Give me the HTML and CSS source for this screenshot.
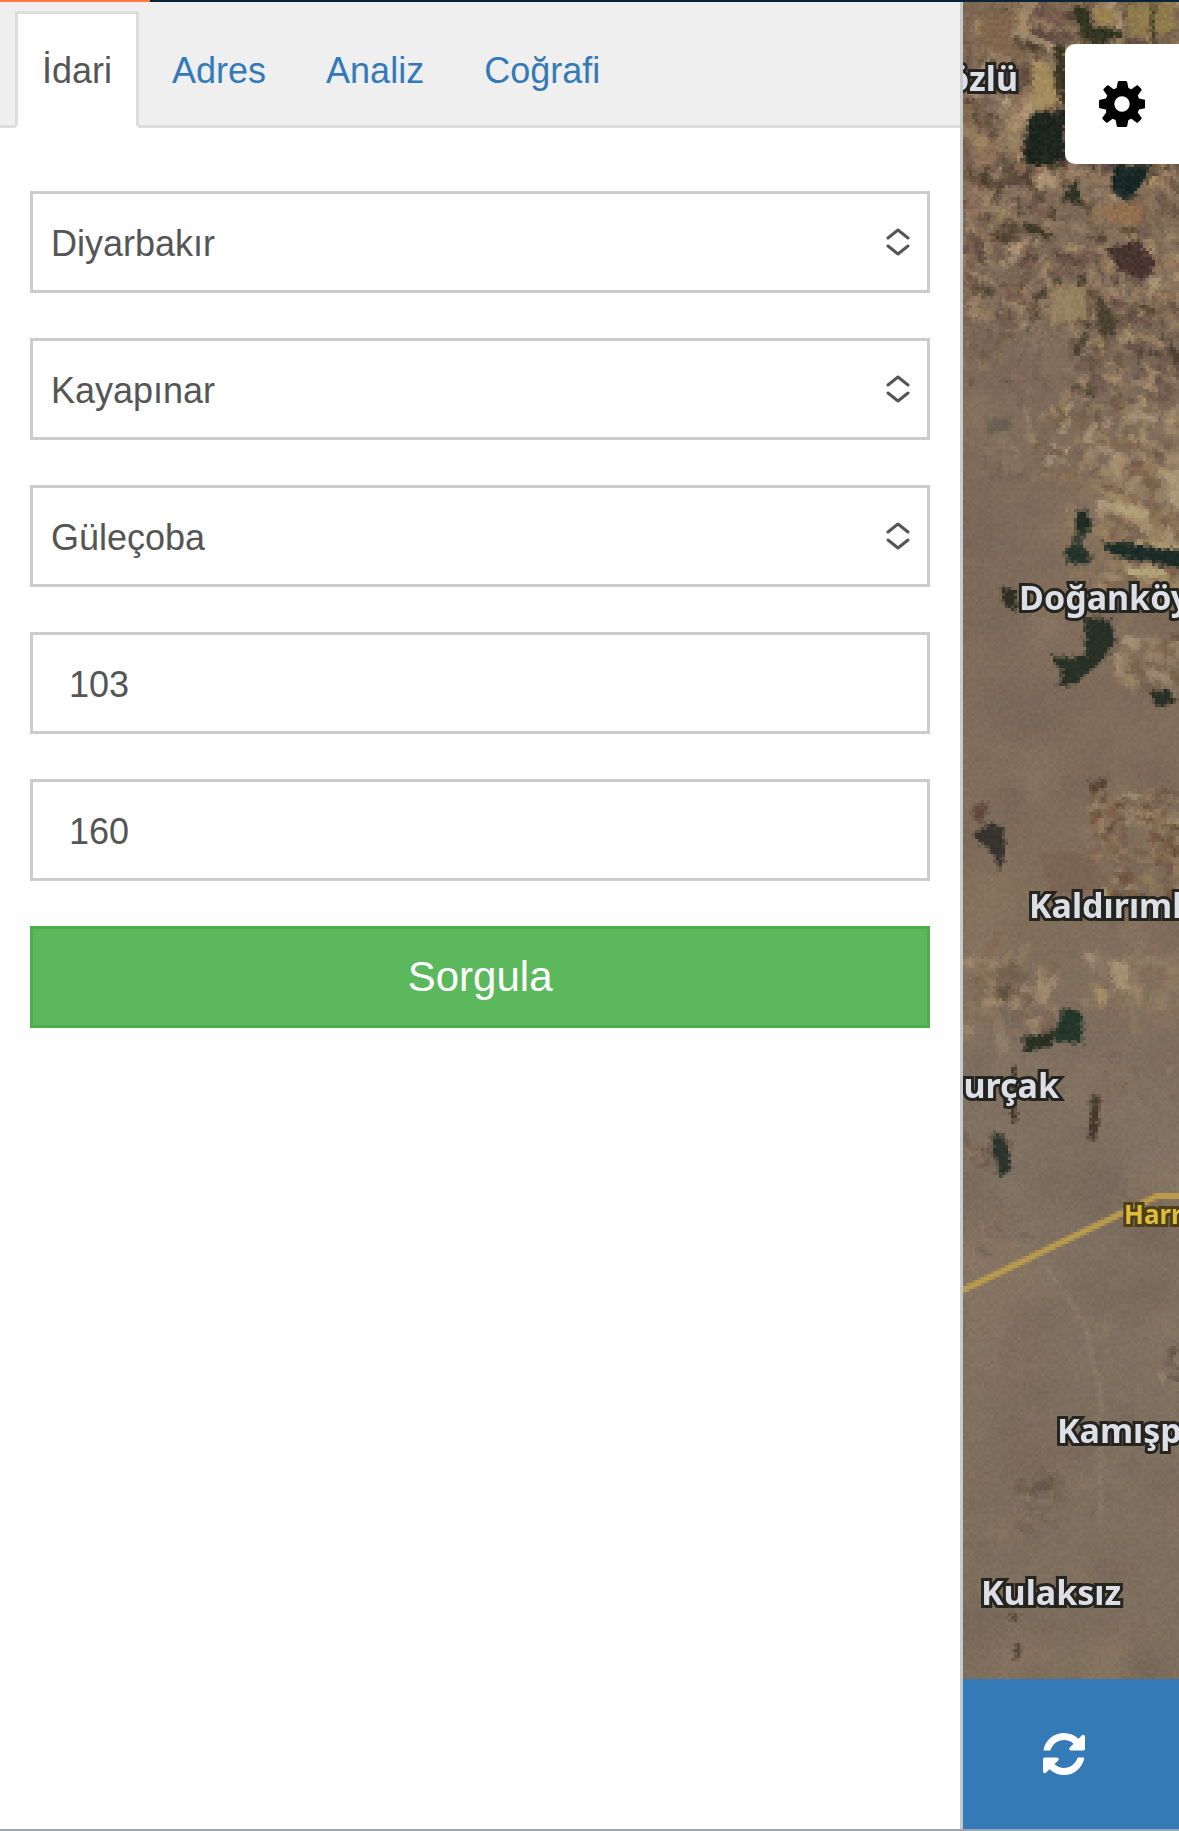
FILE: index.html
```html
<!DOCTYPE html>
<html lang="tr">
<head>
  <meta charset="UTF-8" />
  <meta name="viewport" content="width=device-width, initial-scale=1.0"/>
  <title>Parsel Sorgu</title>
  <link rel="stylesheet" href="styles.css">
</head>
<body>
  <div class="topbar"><div class="topbar-fill"></div></div>

  <div class="workspace">
    <aside class="panel">
      <nav class="tabs">
        <a class="tab active" href="#idari">İdari</a>
        <a class="tab" href="#adres">Adres</a>
        <a class="tab" href="#analiz">Analiz</a>
        <a class="tab" href="#cografi">Coğrafi</a>
      </nav>

      <form class="query" id="idari">
        <div class="select-wrap">
          <select class="field" name="il" aria-label="İl">
            <option>Diyarbakır</option>
          </select>
          <svg class="chevron" viewBox="0 0 24 28" aria-hidden="true"><path d="M2 10l10-8 10 8M2 18l10 8 10-8"/></svg>
        </div>
        <div class="select-wrap">
          <select class="field" name="ilce" aria-label="İlçe">
            <option>Kayapınar</option>
          </select>
          <svg class="chevron" viewBox="0 0 24 28" aria-hidden="true"><path d="M2 10l10-8 10 8M2 18l10 8 10-8"/></svg>
        </div>
        <div class="select-wrap">
          <select class="field" name="mahalle" aria-label="Mahalle">
            <option>Güleçoba</option>
          </select>
          <svg class="chevron" viewBox="0 0 24 28" aria-hidden="true"><path d="M2 10l10-8 10 8M2 18l10 8 10-8"/></svg>
        </div>
        <input class="field number" type="text" name="ada" value="103" aria-label="Ada" />
        <input class="field number" type="text" name="parsel" value="160" aria-label="Parsel" />
        <button class="submit" type="submit">Sorgula</button>
      </form>
    </aside>

    <main class="map">
      <div class="map-view">
        <canvas class="terrain" id="terrain" width="72" height="559"></canvas>
        <svg class="labels" aria-label="Harita">
          <text class="place" x="55" y="89" text-anchor="end">özlü</text>
          <text class="place" x="56" y="608">Doğanköy</text>
          <text class="place" x="66" y="916">Kaldırıml</text>
          <text class="place" x="96" y="1096" text-anchor="end">urçak</text>
          <text class="road-name" x="161" y="1222">Harr</text>
          <text class="place" x="94" y="1441">Kamışp</text>
          <text class="place" x="18" y="1603">Kulaksız</text>
        </svg>
        <button class="settings" type="button" aria-label="Ayarlar">
          <svg viewBox="0 0 46 46" aria-hidden="true"><path fill-rule="evenodd" d="M19 0h8q1 0 1.200 1l1.200 6 3 1.300 5-3.700q1-.6 1.800.2l3 3q.8.800.2 1.700l-3.600 5.100 1.200 2.900 6 1.300q1 .2 1 1.200v6q0 1-1 1.200l-6 1.300-1.200 2.900 3.600 5.100q.6.900-.2 1.700l-3 3q-.8.800-1.800.2l-5-3.700-3 1.300-1.200 6q-.2 1-1.200 1h-8q-1 0-1.200-1l-1.200-6-3-1.300-5 3.700q-1 .6-1.800-.2l-3-3q-.8-.8-.2-1.700l3.600-5.100L7 28.500l-6-1.300q-1-.2-1-1.200v-6q0-1 1-1.200l6-1.300 1.200-2.900-3.600-5.100q-.6-.9.2-1.700l3-3q.8-.8 1.800-.2l5 3.700 3-1.300 1.200-6q.2-1 1.200-1zM23 15.300a7.700 7.700 0 1 0 0 15.400 7.700 7.700 0 0 0 0-15.400z"/></svg>
        </button>
      </div>
      <div class="map-actions">
        <button class="refresh" type="button" aria-label="Yenile">
          <svg viewBox="0 0 1536 1536" aria-hidden="true"><path d="M1511 928q0 5-1 7-64 268-268 434.500T764 1536q-146 0-282.500-55T238 1324l-129 129q-19 19-45 19t-45-19-19-45V960q0-26 19-45t45-19h448q26 0 45 19t19 45-19 45l-137 137q71 66 161 102t187 36q134 0 250-65t186-179q11-17 53-117 8-23 30-23h192q13 0 22.500 9.500t9.500 22.500zm25-800v448q0 26-19 45t-45 19h-448q-26 0-45-19t-19-45 19-45l138-138Q969 256 768 256q-134 0-250 65T332 500q-11 17-53 117-8 23-30 23H50q-13 0-22.500-9.500T18 608v-7q65-268 270-434.500T768 0q146 0 284 55.500T1297 212l130-129q19-19 45-19t45 19 19 45z"/></svg>
        </button>
      </div>
    </main>
  </div>

  <script src="map.js"></script>
</body>
</html>
```

FILE: styles.css
```css
* {
  box-sizing: border-box;
}
body {
  margin: 0;
  min-height: 100vh;
  display: flex;
  flex-direction: column;
  font-family: "Liberation Sans", Arial, sans-serif;
  font-size: 36px;
  color: #555;
  background: #fff;
}
.topbar {
  height: 2px;
  background: #0b2338;
}
.topbar-fill {
  width: 150px;
  height: 2px;
  background: #ff7840;
}
.workspace {
  flex: 1;
  display: flex;
  border-bottom: 2px solid #9aa7b0;
}

/* left panel */
.panel {
  width: 81.7%;
  border-right: 3px solid #c6caca;
  background: #fefefe;
}
.tabs {
  display: flex;
  gap: 6px;
  padding: 9px 15px 0;
  background: #efefef;
  border-bottom: 3px solid #ddd;
}
.tab {
  margin-bottom: -3px;
  padding: 37px 24px 34px;
  border: 3px solid transparent;
  line-height: 40px;
  color: #337ab7;
  text-decoration: none;
}
.tab.active {
  color: #555;
  background: #fff;
  border-color: #ddd #ddd #fff;
}
.query {
  display: flex;
  flex-direction: column;
  gap: 45px;
  padding: 63px 30px;
}
.select-wrap {
  position: relative;
}
.field {
  display: block;
  width: 100%;
  height: 102px;
  margin: 0;
  padding: 3px 18px 0;
  border: 3px solid #ccc;
  border-radius: 0;
  background: #fff;
  color: #555;
  font: inherit;
  appearance: none;
}
.number {
  padding-left: 36px;
}
.chevron {
  position: absolute;
  top: 37px;
  right: 20px;
  width: 24px;
  height: 28px;
  fill: none;
  stroke: #555;
  stroke-width: 3;
  stroke-linecap: round;
  stroke-linejoin: round;
  pointer-events: none;
}
.submit {
  height: 102px;
  border: 3px solid #4cae4c;
  background: #5cb85c;
  color: #fff;
  font: inherit;
  font-size: 42px;
  cursor: pointer;
}

/* map */
.map {
  flex: 1;
  display: flex;
  flex-direction: column;
  min-width: 0;
}
.map-view {
  position: relative;
  flex: 1;
  overflow: hidden;
  background: #83705b;
}
.terrain, .labels {
  position: absolute;
  top: 0;
  left: 0;
  width: 100%;
  height: 100%;
}
.terrain {
  object-fit: cover;
  object-position: left top;
  image-rendering: pixelated;
}
.place, .road-name {
  font-family: "Noto Sans", sans-serif;
  font-weight: 700;
  font-size: 34px;
  fill: #dcdfe5;
  stroke: #25241f;
  stroke-width: 6px;
  stroke-linejoin: miter;
  paint-order: stroke;
}
.road-name {
  font-size: 26px;
  fill: #dfbc3c;
  stroke: #4d4019;
}
.settings {
  position: absolute;
  top: 42px;
  right: 0;
  width: 114px;
  height: 120px;
  padding: 0;
  border: 0;
  border-radius: 10px 0 0 10px;
  background: #fff;
  cursor: pointer;
}
.settings svg {
  width: 46px;
  height: 46px;
  fill: #000;
}
.map-actions {
  display: flex;
  height: 150px;
  background: #337ab7;
}
.refresh {
  width: 202px;
  padding: 0;
  border: 0;
  background: #337ab7;
  cursor: pointer;
}
.refresh svg {
  width: 42px;
  height: 42px;
  fill: #fff;
}
.settings svg, .refresh svg {
  display: block;
  margin: auto;
}
```

FILE: map.js
```js
const canvas = document.getElementById('terrain');
const ctx = canvas.getContext('2d');
const CELL = 3;
const W = canvas.width * CELL;
const H = canvas.height * CELL;

// fixed seed so the ground looks the same on every load
let seed = 4217;
function rnd() {
  seed = (seed * 1664525 + 1013904223) % 4294967296;
  return seed / 4294967296;
}

function poly(color, points) {
  ctx.fillStyle = color;
  ctx.beginPath();
  points.forEach(([x, y], i) => i ? ctx.lineTo(x, y) : ctx.moveTo(x, y));
  ctx.closePath();
  ctx.fill();
}

// small rotated plots scattered inside a box
function plots(x, y, w, h, count, size, colors, alpha) {
  for (let i = 0; i < count; i++) {
    ctx.save();
    ctx.translate(x + rnd() * w, y + rnd() * h);
    ctx.rotate([0.4, -1.1, 1.4, 0.1][Math.floor(rnd() * 4)]);
    ctx.globalAlpha = alpha * (0.4 + rnd() * 0.6);
    ctx.fillStyle = colors[Math.floor(rnd() * colors.length)];
    ctx.fillRect(0, 0, size * (0.5 + rnd() * 1.6), size * (0.2 + rnd() * 0.5));
    ctx.restore();
  }
}

ctx.scale(1 / CELL, 1 / CELL);

const ground = ctx.createLinearGradient(0, 0, 0, H);
ground.addColorStop(0, '#806a52');
ground.addColorStop(0.22, '#7e6b5a');
ground.addColorStop(0.42, '#806d5b');
ground.addColorStop(0.54, '#806d59');
ground.addColorStop(0.66, '#7f7162');
ground.addColorStop(1, '#7e6f5d');
ctx.fillStyle = ground;
ctx.fillRect(0, 0, W, H);

// soft tone changes
for (let i = 0; i < 260; i++) {
  const x = rnd() * W, y = rnd() * H, r = 10 + rnd() * 45;
  const g = ctx.createRadialGradient(x, y, 0, x, y, r);
  const c = ['116,98,86', '146,126,100', '108,94,84', '134,112,98'][Math.floor(rnd() * 4)];
  g.addColorStop(0, `rgba(${c},0.3)`);
  g.addColorStop(1, `rgba(${c},0)`);
  ctx.fillStyle = g;
  ctx.fillRect(x - r, y - r, r * 2, r * 2);
}

const mixed = ['#a68e65', '#ac9170', '#50402f', '#5b4640', '#98775f', '#7e6953', '#3b3526', '#b59f7e', '#6c5049'];
const pale = ['#b09c7a', '#a48c68', '#bba688', '#7d614a', '#98805f', '#65503e'];

plots(0, 0, 216, 170, 280, 24, mixed, 0.8);
plots(0, 150, 216, 160, 360, 14, mixed, 0.8);
plots(110, 270, 106, 130, 200, 12, mixed, 0.75);
plots(0, 300, 110, 90, 70, 9, mixed, 0.4);
plots(65, 400, 151, 70, 150, 12, pale, 0.75);
plots(20, 430, 60, 45, 40, 9, ['#5e5045', '#9c8b72'], 0.45);
plots(135, 460, 81, 130, 110, 17, pale, 0.8);
plots(100, 470, 50, 120, 50, 12, ['#a48a66', '#8f7659'], 0.6);
plots(150, 630, 66, 50, 35, 16, pale, 0.7);
plots(124, 785, 92, 110, 170, 10, ['#5f4433', '#a08763', '#72523d', '#9b7e5b', '#a79674'], 0.75);
plots(0, 950, 80, 80, 60, 16, pale, 0.5);
plots(115, 950, 101, 60, 55, 16, ['#9d8a6a', '#8c735f'], 0.5);
plots(115, 1045, 101, 60, 30, 9, ['#927a6c', '#6d5b4c'], 0.4);
plots(0, 1130, 40, 30, 30, 9, ['#543f34', '#957967'], 0.55);
plots(10, 1215, 60, 40, 16, 8, ['#5b463e', '#927a69'], 0.5);
plots(200, 1350, 16, 24, 12, 9, ['#463c33', '#a0917c'], 0.6);
plots(45, 1470, 50, 60, 50, 8, ['#655644', '#928471'], 0.45);

// fields
poly('#a58c5e', [[70, 57], [87, 63], [97, 100], [70, 110]]);
poly('#80674e', [[20, 10], [57, 10], [48, 35], [60, 58], [18, 44]]);
poly('#9b8352', [[132, 5], [152, 5], [150, 24], [132, 20]]);
poly('#8f7b4b', [[163, 2], [212, 2], [212, 30], [166, 34]]);
poly('#93704f', [[137, 205], [180, 202], [178, 223], [145, 219]]);
poly('#95815f', [[88, 285], [125, 284], [122, 315], [88, 325]]);
poly('#1f261e', [[67, 112], [102, 108], [102, 157], [77, 165], [59, 160]]);
poly('#3b3522', [[90, 43], [102, 43], [102, 110], [95, 90]]);
poly('#303421', [[109, 3], [124, 5], [130, 25], [160, 28], [160, 35], [132, 42], [120, 35]]);
poly('#2b251b', [[188, 2], [191, 2], [191, 38], [188, 38]]);
poly('#1b2926', [[150, 163], [187, 163], [183, 178], [163, 201], [150, 188]]);
poly('#2c2f24', [[97, 198], [114, 177], [119, 201]]);
poly('#47342f', [[144, 247], [174, 238], [194, 261], [180, 280], [154, 265]]);
poly('#4b4332', [[134, 291], [154, 318], [154, 335], [134, 331]]);
poly('#6a6051', [[22, 418], [46, 415], [48, 428], [26, 432]]);

// irrigated land around Doğanköy
poly('#1f2b24', [[114, 508], [124, 510], [129, 528], [114, 533]]);
poly('#26332c', [[102, 545], [117, 541], [129, 555], [124, 563], [104, 560]]);
poly('#3a4235', [[112, 530], [124, 530], [117, 545], [108, 545]]);
poly('#1c2c26', [[140, 541], [167, 541], [216, 550], [216, 565], [167, 558], [142, 548]]);
poly('#b09f78', [[154, 498], [187, 510], [187, 518], [152, 510]]);
poly('#b2a579', [[164, 565], [206, 568], [206, 577], [164, 573]]);
poly('#a9966e', [[172, 537], [214, 543], [214, 547], [172, 542]]);
poly('#2d3023', [[38, 586], [54, 588], [54, 612], [40, 601]]);
poly('#293127', [[120, 615], [147, 618], [152, 641], [137, 661], [114, 681], [94, 685], [100, 671], [90, 661], [90, 653], [110, 656], [124, 651]]);
poly('#2b3026', [[187, 691], [204, 686], [214, 701], [194, 706]]);

poly('#37332e', [[9, 833], [30, 821], [40, 825], [42, 850], [37, 871], [31, 855], [24, 845]]);
poly('#5f483d', [[10, 803], [26, 800], [20, 822], [10, 815]]);
poly('#5a4434', [[126, 780], [146, 775], [142, 785], [128, 791]]);
poly('#7c6454', [[75, 850], [125, 852], [150, 885], [90, 895]]);
poly('#61503f', [[29, 991], [49, 980], [44, 1001]]);
poly('#a58f70', [[144, 958], [165, 961], [167, 991], [154, 988]]);
poly('#a18c75', [[120, 951], [132, 951], [130, 971]]);
poly('#a48f69', [[130, 985], [147, 988], [137, 1008]]);
poly('#2a3024', [[60, 1035], [90, 1030], [90, 1045], [62, 1051]]);
poly('#24352a', [[90, 1028], [98, 1018], [98, 1005], [119, 1011], [119, 1041], [92, 1040]]);
poly('#423a2a', [[48, 1066], [54, 1066], [54, 1121], [48, 1121]]);
poly('#453a2c', [[128, 1093], [137, 1093], [134, 1138], [125, 1138]]);
poly('#2b332b', [[29, 1131], [42, 1135], [49, 1165], [37, 1175], [29, 1148]]);
poly('#66584a', [[70, 1482], [91, 1473], [88, 1488], [68, 1492]]);
poly('#51432f', [[47, 1613], [56, 1613], [54, 1619], [47, 1619]]);
poly('#594a39', [[51, 1642], [58, 1642], [58, 1656], [51, 1660]]);

// dry stream bed
ctx.strokeStyle = 'rgba(160,144,124,0.4)';
ctx.lineWidth = 3;
ctx.beginPath();
ctx.moveTo(80, 1258);
ctx.lineTo(92, 1278);
ctx.lineTo(124, 1324);
ctx.lineTo(127, 1350);
ctx.lineTo(138, 1395);
ctx.lineTo(137, 1520);
ctx.stroke();

// roughen the edges, then add grain, stronger over the farmed area in the north
const src = ctx.getImageData(0, 0, canvas.width, canvas.height);
const out = ctx.createImageData(canvas.width, canvas.height);
for (let row = 0; row < canvas.height; row++) {
  for (let col = 0; col < canvas.width; col++) {
    const sx = Math.min(canvas.width - 1, Math.max(0, col + Math.floor(rnd() * 3) - 1));
    const sy = Math.min(canvas.height - 1, Math.max(0, row + Math.floor(rnd() * 3) - 1));
    const from = (sy * canvas.width + sx) * 4;
    const to = (row * canvas.width + col) * 4;
    const n = (rnd() - 0.5) * (row < 115 ? 14 : 7);
    for (let c = 0; c < 3; c++) {
      // half neighbour, half own colour keeps the plots readable
      out.data[to + c] = (src.data[from + c] + src.data[to + c]) / 2 + n;
    }
    out.data[to + 3] = 255;
  }
}
ctx.putImageData(out, 0, 0);

ctx.strokeStyle = '#b89b4d';
ctx.lineWidth = 6;
ctx.beginPath();
ctx.moveTo(-4, 1290);
ctx.lineTo(194, 1194);
ctx.lineTo(220, 1194);
ctx.stroke();
```
